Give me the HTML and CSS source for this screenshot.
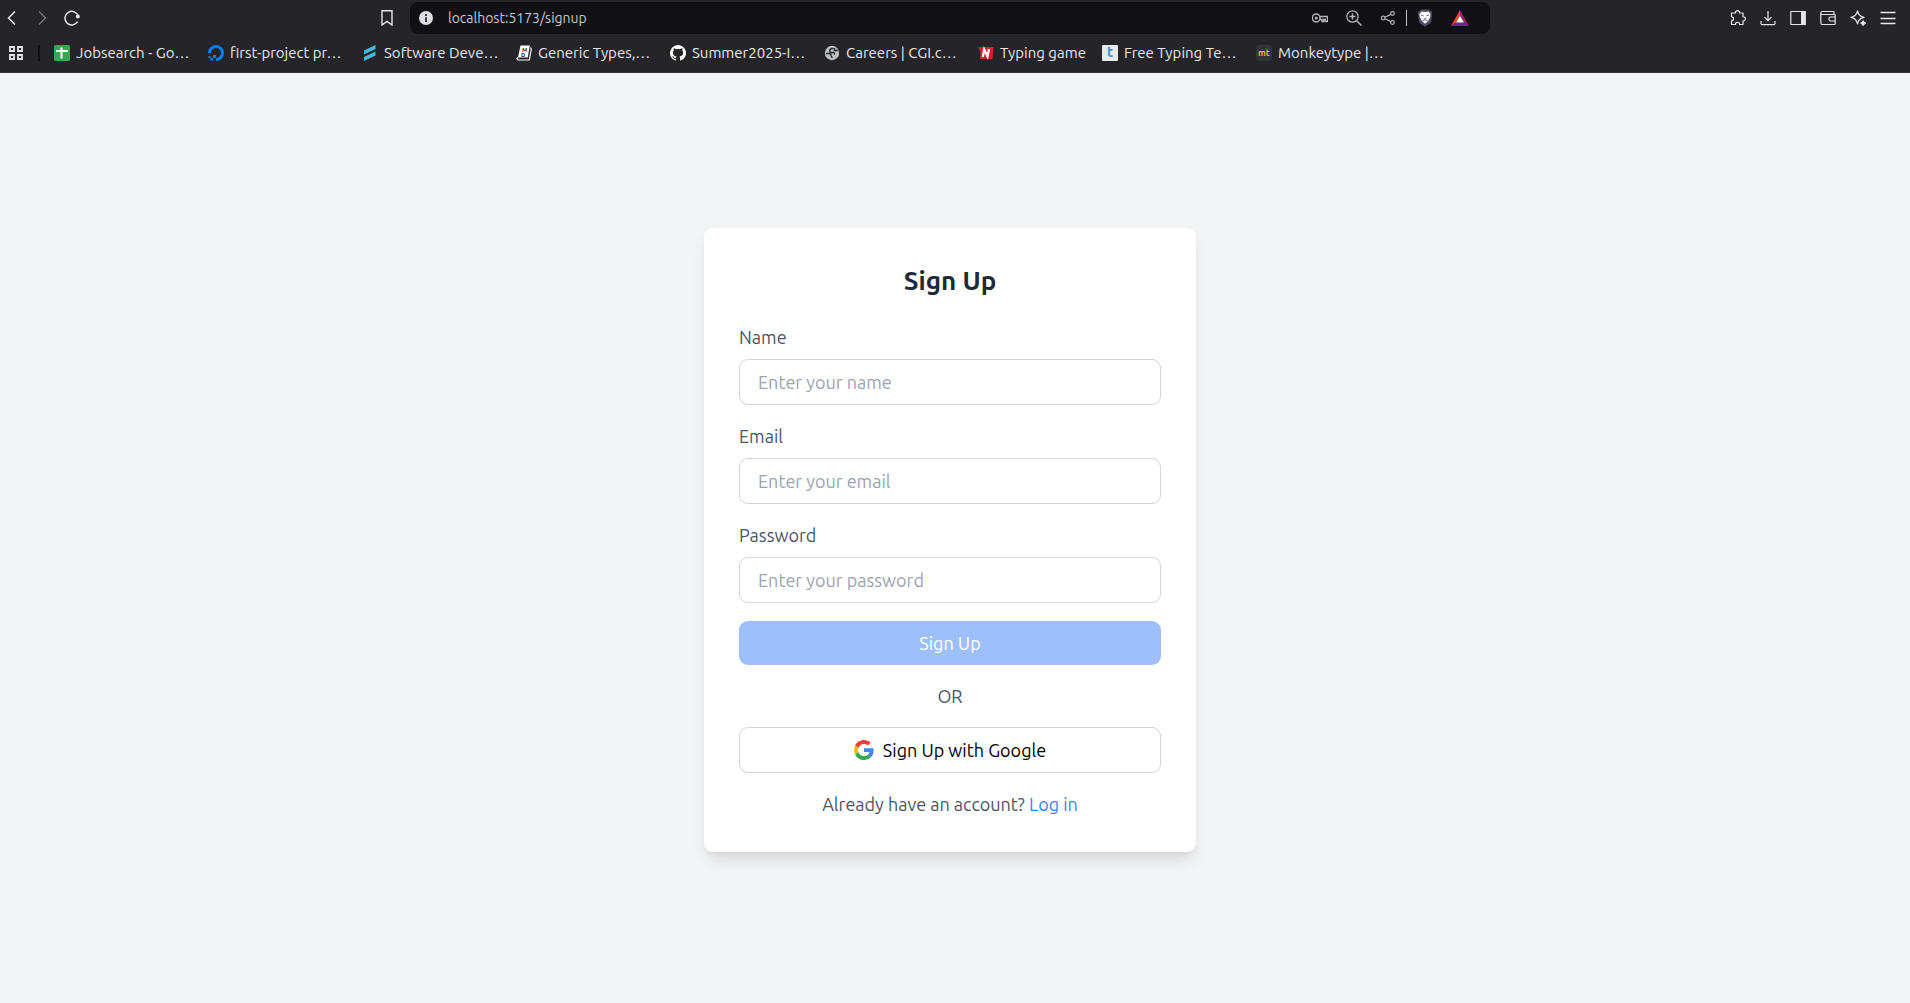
FILE: index.html
```html
<!DOCTYPE html>
<html lang="en">
<head>
<meta charset="utf-8">
<meta name="viewport" content="width=device-width, initial-scale=1">
<title>Sign Up</title>
<link rel="stylesheet" href="styles.css">
</head>
<body>
<header class="browser">
  <div class="toolbar">
    <nav class="history" aria-label="History">
      <button class="icon-btn" type="button" aria-label="Back"><svg viewBox="0 0 16 16"><path d="M11 1.500 4.500 8 11 14.500" stroke-width="1.500"/></svg></button>
      <button class="icon-btn dim" type="button" aria-label="Forward"><svg viewBox="0 0 16 16"><path d="M5 1.500 11.500 8 5 14.500" stroke-width="1.500"/></svg></button>
      <button class="icon-btn" type="button" aria-label="Reload"><svg viewBox="0 0 16 16"><path d="M14.300 6.300A6.800 6.800 0 1 0 13.600 11.700" stroke-width="1.500"/><circle cx="13.800" cy="6.400" r="2" fill="currentColor" stroke="none"/></svg></button>
    </nav>
    <div class="location">
      <button class="icon-btn" type="button" aria-label="Bookmark this page"><svg viewBox="0 0 16 16"><path d="M3 .8h10v14.200l-5-3.600-5 3.600z" stroke-width="1.400"/></svg></button>
      <div class="address">
        <svg class="info" viewBox="0 0 16 16" aria-hidden="true"><circle cx="8" cy="8" r="7" fill="#dddde3"/><path d="M8 4v2M8 7.200v4.800" stroke="#3b3b40" stroke-width="2"/></svg>
        <input class="url" type="text" value="localhost:5173/signup" aria-label="Address">
        <div class="address-tools">
          <button class="icon-btn" type="button" aria-label="Passwords"><svg viewBox="0 0 16 16"><circle cx="4.200" cy="8" r="3.900" stroke-width="1.500"/><circle cx="4.200" cy="8" r="1.500" fill="currentColor" stroke="none"/><path d="M8 6.500h7.400v5h-2.200V9.500h-1.600v2H10V9.500H8" stroke-width="1.400"/></svg></button>
          <button class="icon-btn" type="button" aria-label="Zoom"><svg viewBox="0 0 16 16"><circle cx="6.500" cy="6.500" r="5.700"/><path d="M10.700 10.700 15.500 15.500M6.500 3.500v6M3.500 6.500h6" stroke-width="1.500"/></svg></button>
          <button class="icon-btn" type="button" aria-label="Share"><svg viewBox="0 0 16 16"><circle cx="3.200" cy="8" r="1.800"/><circle cx="12.500" cy="3.500" r="1.800"/><circle cx="12.500" cy="12.500" r="1.800"/><path d="M5 7.200l5.800-2.800M5 8.800l5.800 2.800"/></svg></button>
          <span class="rule"></span>
          <button class="icon-btn shield" type="button" aria-label="Shields"><svg viewBox="0 0 16 18"><path d="M4 .5h8l1.300 1.500 2 .5-.6 3 .2 2-1.400 6.500L8 17.800 2.500 14 1.100 7.500l.2-2-.6-3 2-.5z" fill="#4b4b66" stroke="none"/><path d="M4.700 2.500 8 3l3.300-.5L13.500 5l-.4 3.500-2 3.500L8 14.800 4.900 12l-2-3.500L2.500 5z" fill="#fff" stroke="none"/><path d="M4 6l2.500.7M12 6l-2.500.7M6.500 9 8 10.200 9.500 9M5.500 11.500 8 10.800l2.500.7" stroke="#4b4b66" stroke-width=".8"/></svg></button>
          <button class="icon-btn rewards" type="button" aria-label="Rewards"><svg viewBox="0 0 18 16"><path d="M9 0v5.500l-4 7L0 16z" fill="#ff4724" stroke="none"/><path d="M9 0l9 16-5-3.500-4-7z" fill="#9e1f63" stroke="none"/><path d="M0 16l5-3.500h8l5 3.500z" fill="#662d91" stroke="none"/><path d="M9 5.800l4 6.700H5z" fill="#fff" stroke="none"/></svg></button>
        </div>
      </div>
    </div>
    <div class="tools">
      <button class="icon-btn" type="button" aria-label="Extensions"><svg viewBox="0 0 16 16"><path d="M1.500 3h4c-.2-1.500.8-2.300 2-2.300S9.700 1.500 9.500 3H13v3.800c1.500-.2 2.300.8 2.300 2s-.8 2.200-2.300 2V14.500H9.500c.2-1.600-.8-2.200-2-2.200s-2.200.6-2 2.200h-4v-3.700c1.300 0 2-.8 2-2s-.7-2-2-2z" stroke-linejoin="round"/></svg></button>
      <button class="icon-btn" type="button" aria-label="Downloads"><svg viewBox="0 0 16 16"><path d="M8 1v9.500M4.500 7.200 8 10.700l3.500-3.500M1 11v2.500q0 1.200 1.200 1.200h11.600q1.200 0 1.200-1.200V11"/></svg></button>
      <button class="icon-btn" type="button" aria-label="Sidebar"><svg viewBox="0 0 16 16"><path d="M.8 1.500h14.400v13H.8z"/><path d="M11 1h4.500v14H11z" fill="currentColor" stroke="none"/></svg></button>
      <button class="icon-btn" type="button" aria-label="Wallet"><svg viewBox="0 0 16 16"><path d="M14 4.500V2.200q0-.7-.7-.7H2.300Q.8 1.500.8 3v10q0 1.500 1.500 1.500h12.200q.7 0 .7-.7V5.200q0-.7-.7-.7H2Q.8 4.500.8 3.200M15 7h-4.500Q9 7 9 8.500v1Q9 11 10.500 11H15"/></svg></button>
      <button class="icon-btn" type="button" aria-label="Assistant"><svg viewBox="0 0 16 16"><path d="M7.500.8c.8 4 2.500 5.700 6.500 6.500-4 .8-5.700 2.500-6.500 6.500C6.700 9.800 5 8.100 1 7.300c4-.8 5.700-2.500 6.500-6.500z" stroke-linejoin="round"/><path d="M13.200 10.500q.4 2.200 2.600 2.600-2.200.4-2.600 2.600-.4-2.200-2.600-2.600 2.200-.4 2.600-2.600z" fill="currentColor"/></svg></button>
      <button class="icon-btn" type="button" aria-label="Menu"><svg viewBox="0 0 16 16"><path d="M.5 2.500h15M.5 8.500h15M.5 13.500h15" stroke-width="1.300"/></svg></button>
    </div>
  </div>
  <nav class="bookmarks" aria-label="Bookmarks">
    <button class="icon-btn apps" type="button" aria-label="All bookmarks"><svg viewBox="0 0 16 16"><path d="M2 2h4v4H2zM10 2h4v4h-4zM2 10h4v4H2zM10 10h4v4h-4z" stroke-width="1.800"/></svg></button>
    <span class="divider"></span>
    <a class="bookmark" href="#"><svg viewBox="0 0 16 16"><rect width="16" height="16" rx="1.500" fill="#34a853"/><path d="M2 6h12M7.500 2.500v11" stroke="#fff" stroke-width="2"/></svg><span>Jobsearch - Go…</span></a>
    <a class="bookmark" href="#"><svg viewBox="0 0 16 16"><path d="M8 14.500A6.500 6.500 0 1 0 1.500 8" stroke="#0080ff" stroke-width="3"/><path d="M5 10h3v3H5zM2.500 13H5v2.500H2.500zM.5 11h2v2h-2z" fill="#0080ff"/></svg><span>first-project pr…</span></a>
    <a class="bookmark" href="#"><svg viewBox="0 0 16 16"><path d="M2 5.500 13.500 0v4L2 9.500zM2 12 13.500 6.500v4L2 16z" fill="#3cbfdf"/></svg><span>Software Deve…</span></a>
    <a class="bookmark" href="#"><svg viewBox="0 0 16 16"><path d="M4.500.5h9.300L11.800 12.500H2z" fill="#fff"/><path d="M14.500 2.500 15.300 4l-2 11H2L.8 13.500l1.200-1" stroke="#fff" stroke-width="1.200"/><g class="mark" fill="#333"><text x="6" y="6.500" font-size="6">M</text><text x="5" y="12" font-size="6">D</text></g></svg><span>Generic Types,…</span></a>
    <a class="bookmark" href="#"><svg viewBox="0 0 16 16"><path fill="#fff" d="M8 0a8 8 0 0 0-2.530 15.590c.4.070.55-.17.55-.38v-1.490c-2.230.48-2.690-.95-2.690-.95-.36-.92-.89-1.170-.89-1.170-.73-.5.050-.49.050-.49.810.06 1.230.83 1.230.83.720 1.230 1.880.87 2.340.67.070-.52.280-.88.510-1.080-1.780-.2-3.640-.89-3.640-3.950 0-.87.310-1.590.82-2.150-.08-.2-.36-1.020.08-2.120 0 0 .67-.21 2.200.82a7.600 7.600 0 0 1 4 0c1.530-1.040 2.200-.82 2.200-.82.440 1.100.16 1.920.08 2.120.51.560.82 1.270.82 2.150 0 3.070-1.870 3.750-3.650 3.950.29.250.54.730.54 1.480v2.200c0 .21.150.46.550.38A8 8 0 0 0 8 0z"/></svg><span>Summer2025-I…</span></a>
    <a class="bookmark" href="#"><svg viewBox="0 0 16 16"><circle cx="8" cy="8" r="7.200" fill="#bdc1c6"/><path d="M9.500 3.500H7.500Q5.500 4 5.800 6t2 1.600h1.700q1.200.2 1 2M2 8.500h3.500q1.500.3 1.500 2t1.500 2M10.500 3v2.500H14" stroke="#29282d" stroke-width="1.500"/></svg><span>Careers | CGI.c…</span></a>
    <a class="bookmark short" href="#"><svg viewBox="0 0 16 16"><path d="M.5 2h15l-1 12H2l.5-6z" fill="#d5202f"/><path d="M4.800 12 6.200 4.500 9.500 11.500 11 4" stroke="#fff" stroke-width="2.200"/></svg><span>Typing game</span></a>
    <a class="bookmark" href="#"><svg viewBox="0 0 16 16"><rect width="16" height="16" rx="1" fill="#e9eaec"/><text class="mark" x="5" y="12" font-size="14" fill="#3498db">t</text></svg><span>Free Typing Te…</span></a>
    <a class="bookmark" href="#"><svg viewBox="0 0 16 16"><rect width="16" height="16" rx="3" fill="#323437"/><text class="mark" x="2" y="11" font-size="9" fill="#e2b714">mt</text></svg><span>Monkeytype |…</span></a>
  </nav>
</header>
<main class="page">
  <section class="card">
    <h1 class="title">Sign Up</h1>
    <form class="form">
      <div class="field">
        <label for="name">Name</label>
        <input id="name" type="text" placeholder="Enter your name">
      </div>
      <div class="field">
        <label for="email">Email</label>
        <input id="email" type="email" placeholder="Enter your email">
      </div>
      <div class="field">
        <label for="password">Password</label>
        <input id="password" type="password" placeholder="Enter your password">
      </div>
      <button class="submit" type="submit" disabled>Sign Up</button>
      <p class="note">OR</p>
      <button class="google" type="button">
        <svg viewBox="0 0 48 48" aria-hidden="true"><path fill="#EA4335" d="M24 9.500c3.540 0 6.710 1.220 9.210 3.600l6.850-6.850C35.900 2.380 30.470 0 24 0 14.620 0 6.510 5.380 2.560 13.220l7.980 6.190C12.430 13.720 17.740 9.500 24 9.500z"/><path fill="#4285F4" d="M46.980 24.550c0-1.570-.15-3.090-.38-4.550H24v9.020h12.940c-.58 2.960-2.260 5.480-4.780 7.180l7.730 6c4.510-4.180 7.090-10.360 7.090-17.650z"/><path fill="#FBBC05" d="M10.530 28.590c-.48-1.450-.76-2.990-.76-4.590s.27-3.140.76-4.590l-7.980-6.190C.92 16.460 0 20.120 0 24c0 3.880.92 7.540 2.560 10.780l7.970-6.190z"/><path fill="#34A853" d="M24 48c6.480 0 11.930-2.130 15.890-5.810l-7.730-6c-2.150 1.450-4.920 2.300-8.160 2.300-6.260 0-11.570-4.220-13.470-9.910l-7.980 6.190C6.510 42.620 14.620 48 24 48z"/></svg>
        <span>Sign Up with Google</span>
      </button>
      <p class="note">Already have an account? <a href="#">Log in</a></p>
    </form>
  </section>
</main>
</body>
</html>
```
FILE: styles.css
```css
* {
  box-sizing: border-box;
}

body {
  margin: 0;
  min-height: 100vh;
  display: flex;
  flex-direction: column;
  background: #f3f4f6;
  color: #000;
  font-family: Ubuntu, "Noto Sans", "Open Sans", sans-serif;
  font-size: 18px;
  line-height: 26px;
}

button,
input {
  font: inherit;
}

svg {
  display: block;
  flex: none;
  width: 16px;
  height: 16px;
  fill: none;
}

/* Browser bars */
.browser {
  background: #252429;
  border-bottom: 1px solid #35343a;
  font-size: 14px;
  line-height: 20px;
}

.toolbar {
  display: grid;
  grid-template-columns: 375fr 1115fr 420fr;
  align-items: center;
  height: 36px;
}

.icon-btn {
  display: block;
  padding: 0;
  border: 0;
  background: none;
  color: #e6e6ea;
}

.icon-btn svg {
  stroke: currentColor;
  stroke-width: 1.2;
}

.dim {
  color: #707076;
}

.history {
  display: flex;
  gap: 14px;
  padding-left: 4px;
}

.location {
  display: flex;
  align-items: center;
  gap: 15px;
  padding-left: 4px;
}

.address {
  flex: 1;
  display: flex;
  align-items: center;
  height: 32px;
  padding: 0 21px 0 8px;
  border-radius: 8px;
  background: #111113;
}

.url {
  flex: 1;
  min-width: 0;
  margin-left: 14px;
  padding: 0;
  border: 0;
  outline: 0;
  background: none;
  color: #c6c8d2;
}

.address-tools {
  display: flex;
  align-items: center;
  gap: 18px;
}

.address-tools .icon-btn {
  color: #b4b5bd;
}

.rule {
  width: 1px;
  height: 16px;
  margin: 0 -8px;
  background: #c0c0c6;
}

.shield svg {
  height: 18px;
}

.rewards svg {
  width: 18px;
}

.tools {
  display: flex;
  justify-content: flex-end;
  gap: 14px;
  padding-right: 14px;
}

.bookmarks {
  display: flex;
  align-items: center;
  height: 36px;
  padding: 0 8px 2px;
  font-size: 15px;
}

.divider {
  width: 2px;
  height: 16px;
  margin: 0 14px;
  background: #111113;
}

.bookmark {
  display: flex;
  align-items: center;
  gap: 6px;
  width: 154px;
  color: #e8e8ec;
  text-decoration: none;
  white-space: nowrap;
}

.short {
  width: 124px;
}

.mark {
  font-weight: 700;
}

/* Sign-up page */
.page {
  flex: 1;
  display: flex;
  align-items: center;
  justify-content: center;
  padding: 4px 10px 0 0;
}

.card {
  width: 100%;
  max-width: 492px;
  padding: 35px;
  border-radius: 9px;
  background: #fff;
  box-shadow: 0 11px 16px -3px rgba(0, 0, 0, 0.1), 0 4px 7px -4px rgba(0, 0, 0, 0.1);
}

.title {
  margin: 0 0 26px;
  color: #1f2937;
  font-size: 26px;
  font-weight: 600;
  line-height: 35px;
  text-align: center;
}

.form {
  display: flex;
  flex-direction: column;
  gap: 18px;
}

.field {
  display: flex;
  flex-direction: column;
  gap: 9px;
  color: #4b5563;
}

.field input {
  height: 46px;
  padding: 0 18px;
  border: 1px solid #d1d5db;
  border-radius: 9px;
  background: #fff;
  color: #000;
}

.field input::placeholder {
  color: #9ca3af;
  opacity: 1;
}

.submit {
  height: 44px;
  padding: 0;
  border: 0;
  border-radius: 9px;
  background: #9dc0fa;
  color: #fff;
}

.note {
  margin: 0;
  color: #4b5563;
  text-align: center;
}

.note a {
  color: #3b82f6;
  text-decoration: none;
}

.google {
  display: flex;
  align-items: center;
  justify-content: center;
  gap: 9px;
  height: 46px;
  padding: 0;
  border: 1px solid #d1d5db;
  border-radius: 9px;
  background: #fff;
  color: #000;
}

.google svg {
  width: 20px;
  height: 20px;
}
```
